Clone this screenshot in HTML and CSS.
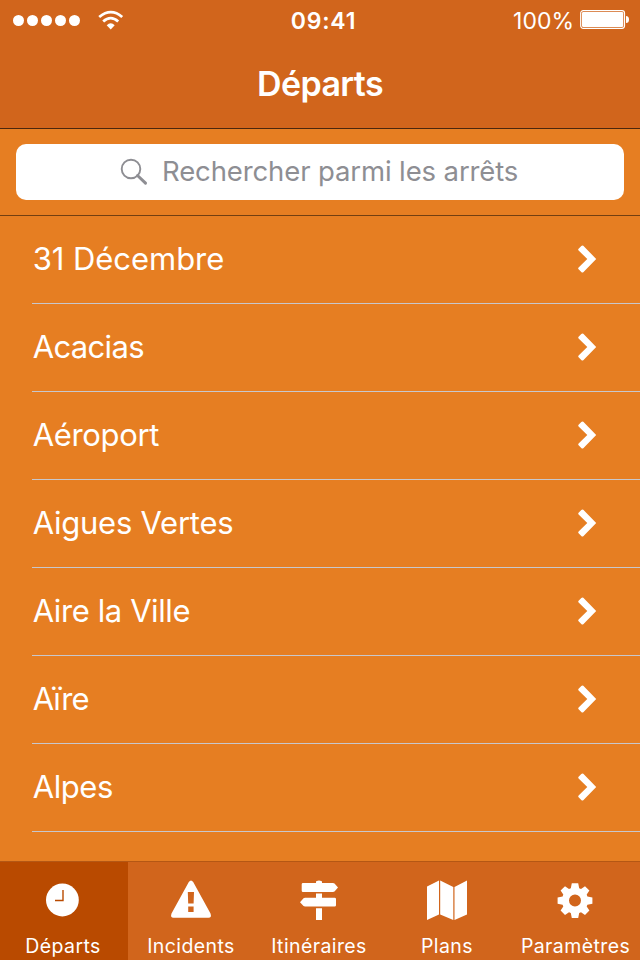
FILE: index.html
```html
<!DOCTYPE html>
<html lang="fr">
<head>
<meta charset="utf-8">
<title>Départs</title>
<link rel="stylesheet" href="styles.css">
</head>
<body>
<svg width="0" height="0" class="defs"><symbol id="chevron" viewBox="0 0 20 30"><path d="M6.300 1.800Q5.300 1 4.300 2L1.600 4.700Q.7 5.600 1.600 6.500L10.300 15L1.600 23.500Q.7 24.400 1.600 25.300L4.300 28Q5.300 29 6.300 28.200L19.200 15Z"/></symbol></svg>
<header class="header">
  <div class="status">
    <div class="signal"><i></i><i></i><i></i><i></i><i></i></div>
    <svg class="wifi" viewBox="0 0 26 20"><g fill="none" stroke="#fff" stroke-width="2.800"><path d="M1.200 7Q13-2.700 24.200 7"/><path d="M5.200 11.500Q12.700 4.800 20.200 11.500"/></g><path fill="#fff" d="M8.700 15.200Q12.700 11.200 16.700 15.200L12.700 19.400Z"/></svg>
    <span class="time">09:41</span>
    <span class="percent">100%</span>
    <svg class="battery" viewBox="0 0 50 20"><rect x=".7" y=".7" width="43.800" height="17.600" rx="2.500" fill="none" stroke="#fff" stroke-width="1.200"/><rect x="2" y="2" width="41.200" height="15" rx="1.300" fill="#fff"/><path d="M46 6Q49 6 49 9.500T46 13Z" fill="#fff"/></svg>
  </div>
  <h1 class="title">Départs</h1>
</header>
<div class="searchbar"><div class="field">
  <svg class="lens" viewBox="0 0 28 28"><g fill="none" stroke="#8e8e93"><circle cx="11" cy="11" r="9.300" stroke-width="1.900"/><path d="M17.500 17.500L25.500 25.200" stroke-width="3" stroke-linecap="round"/></g></svg>
  <span class="placeholder">Rechercher parmi les arrêts</span>
</div></div>
<ul class="list">
  <li><span class="s1">31 Décembre</span><svg class="chev"><use href="#chevron"/></svg></li>
  <li><span class="s2">Acacias</span><svg class="chev"><use href="#chevron"/></svg></li>
  <li><span class="s3">Aéroport</span><svg class="chev"><use href="#chevron"/></svg></li>
  <li><span class="s4">Aigues Vertes</span><svg class="chev"><use href="#chevron"/></svg></li>
  <li><span class="s5">Aire la Ville</span><svg class="chev"><use href="#chevron"/></svg></li>
  <li><span class="s6">Aïre</span><svg class="chev"><use href="#chevron"/></svg></li>
  <li><span class="s7">Alpes</span><svg class="chev"><use href="#chevron"/></svg></li>
</ul>
<nav class="tabs">
  <div class="tab active"><svg viewBox="0 0 44 44"><circle cx="21.400" cy="22" r="16.400"/><path d="M22 12V22.500H14" fill="none" stroke="#b94a00" stroke-width="1.400"/></svg><span>Départs</span></div>
  <div class="tab"><svg viewBox="0 0 44 44"><path fill-rule="evenodd" d="M19.800 4Q22 .8 24.200 4L41.500 35.500Q43 39.800 39.500 39.800H4.500Q1 39.800 2.500 35.500ZM18.800 14L19.200 25.400H24.600L25 14ZM19.200 28.500V33.900H24.600V28.500Z"/></svg><span>Incidents</span></div>
  <div class="tab"><svg viewBox="0 0 44 44"><path d="M19 5V4Q19 2.500 22 2.500T25 4V5H36L37.500 5.600L41 9.500L37.500 13.400L36 14H6Q4.700 14 4.700 12.700V6.300Q4.700 5 6 5ZM19 15.500H25V19.700H37.600Q39 19.700 39 21V27.300Q39 28.600 37.600 28.600H8L6.500 28L3 24.200L6.500 20.300L8 19.700H19ZM19 30.200H25V42H19Z"/></svg><span>Itinéraires</span></div>
  <div class="tab"><svg viewBox="0 0 44 44"><path d="M2 8.500L14 2.500V36.500L2 42ZM15.200 2.500L28.300 9V42L15.200 36.500ZM29.500 9L42 2.500V36.500L29.500 42Z"/></svg><span>Plans</span></div>
  <div class="tab"><svg viewBox="0 0 44 44"><g transform="translate(22 22.600)"><path fill-rule="evenodd" d="M-3.200-17.400H3.200L4.200-12.400L6-11.700L10-14.400L14.400-10L11.700-6L12.400-4.200L17.400-3.200V3.200L12.400 4.200L11.700 6L14.400 10L10 14.400L6 11.700L4.200 12.400L3.200 17.400H-3.200L-4.200 12.400L-6 11.700L-10 14.400L-14.400 10L-11.700 6L-12.400 4.200L-17.400 3.200V-3.200L-12.400-4.200L-11.700-6L-14.400-10L-10-14.400L-6-11.700L-4.200-12.400ZM0-6A6 6 0 1 0 0 6A6 6 0 1 0 0-6Z"/></g></svg><span>Paramètres</span></div>
</nav>
</body>
</html>
```

FILE: styles.css
```css
*{box-sizing:border-box}
body{margin:0;width:640px;height:960px;overflow:hidden;display:flex;flex-direction:column;background:#e67e22;color:#fff;font-family:Inter,"Liberation Sans",sans-serif}
.defs{position:absolute}
.header{height:129px;flex:none;background:#d1651c;border-bottom:1px solid #4b260e}
.status{height:40px;display:grid;grid-template-columns:85px 164px 142px 183px 1fr;align-items:center;white-space:nowrap}
.signal{display:flex;gap:3px;padding-left:13px}
.signal i{width:11px;height:11px;border-radius:50%;background:#fff}
.wifi{width:26px;height:20px;margin-left:13px}
.time{text-align:center;font-size:23px;font-weight:600;letter-spacing:.8px;padding:2px 0 0 7px}
.percent{text-align:right;font-size:23px;padding-top:2px}
.battery{width:50px;height:20px;margin:0 0 0 6px}
.title{margin:0;height:88px;line-height:88px;text-align:center;font-size:34px;font-weight:600;letter-spacing:-.6px}
.searchbar{height:87px;flex:none;padding:15px 16px;border-bottom:1px solid #733f11}
.field{height:56px;border-radius:10px;background:#fff;display:flex;align-items:center;padding-left:104px}
.lens{width:28px;height:28px;margin-right:14px}
.placeholder{color:#8e8e93;font-size:27.500px;letter-spacing:-.12px;padding-bottom:2px;white-space:nowrap}
.list{list-style:none;margin:0;padding:0 0 0 32px;height:645px;flex:none}
.list li{height:88px;border-bottom:1px solid #c8c7cc;display:flex;align-items:center;justify-content:space-between;padding:0 43px 1px .7px;font-size:31px}
.list span{padding-bottom:1px}
.s1{letter-spacing:-.05px}
.s2{letter-spacing:-.65px}
.s3{letter-spacing:-.33px}
.s4{letter-spacing:-.25px}
.s5{letter-spacing:-.4px}
.s6{letter-spacing:-.75px}
.s7{letter-spacing:-.4px}
.chev{width:20px;height:30px;fill:#fff}
.tabs{height:99px;flex:none;display:grid;grid-template-columns:repeat(5,128px);background:#d1651c;border-top:1px solid #b45714}
.tab{display:flex;flex-direction:column;align-items:center;padding-top:16px}
.tab.active{background:#b94a00}
.tab svg{width:44px;height:44px;fill:#fff;margin-right:2px}
.tab span{font-size:19.500px;line-height:24px;margin-top:12px;letter-spacing:.4px;margin-right:2px;white-space:nowrap}
.tab:last-child span{margin-right:1px}
```
